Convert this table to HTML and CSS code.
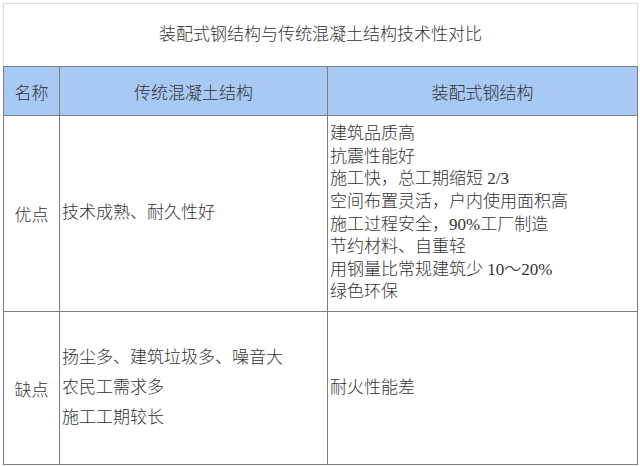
FILE: index.html
```html
<!DOCTYPE html>
<html lang="zh-CN">
<head>
<meta charset="utf-8">
<link rel="stylesheet" href="styles.css">
</head>
<body>
<table class="cmp">
  <colgroup>
    <col class="c-name">
    <col class="c-trad">
    <col class="c-steel">
  </colgroup>
  <tr class="r-title">
    <td colspan="3" class="title">装配式钢结构与传统混凝土结构技术性对比</td>
  </tr>
  <tr class="r-head">
    <td class="head">名称</td>
    <td class="head">传统混凝土结构</td>
    <td class="head">装配式钢结构</td>
  </tr>
  <tr class="r-pro">
    <td class="name">优点</td>
    <td class="txt">技术成熟、耐久性好</td>
    <td class="txt list">建筑品质高<br>抗震性能好<br>施工快，总工期缩短 2/3<br>空间布置灵活，户内使用面积高<br>施工过程安全，90%工厂制造<br>节约材料、自重轻<br>用钢量比常规建筑少 10～20%<br>绿色环保</td>
  </tr>
  <tr class="r-con">
    <td class="name">缺点</td>
    <td class="txt wide">扬尘多、建筑垃圾多、噪音大<br>农民工需求多<br>施工工期较长</td>
    <td class="txt">耐火性能差</td>
  </tr>
</table>
</body>
</html>
```

FILE: styles.css
```css
html, body {
  margin: 0;
  padding: 0;
  background: #ffffff;
}
body {
  padding: 3px 0 0 3px;
  font-family: "Liberation Serif", "Noto Sans CJK SC", serif;
  color: #333333;
  font-size: 17px;
  font-weight: 300;
}
.cmp {
  border-collapse: collapse;
  table-layout: fixed;
  width: 634px;
}
.c-name { width: 56px; }
.c-trad { width: 268px; }
.c-steel { width: 310px; }
.cmp td {
  padding: 0;
  border: 1px solid #7d7d7d;
  vertical-align: middle;
}
.r-title td {
  border-top-color: #dcdcdc;
  border-left-color: #dcdcdc;
  border-right-color: #dcdcdc;
}
.title {
  height: 62px;
  text-align: center;
  line-height: 24px;
}
.r-head td {
  height: 48px;
  background: #a7c9f4;
  text-align: center;
}
.r-pro td { height: 195px; }
.r-con td { height: 152px; }
.name {
  text-align: center;
}
.txt {
  padding-left: 2px !important;
  line-height: 22.6px;
}
.wide {
  line-height: 30px;
}
```
